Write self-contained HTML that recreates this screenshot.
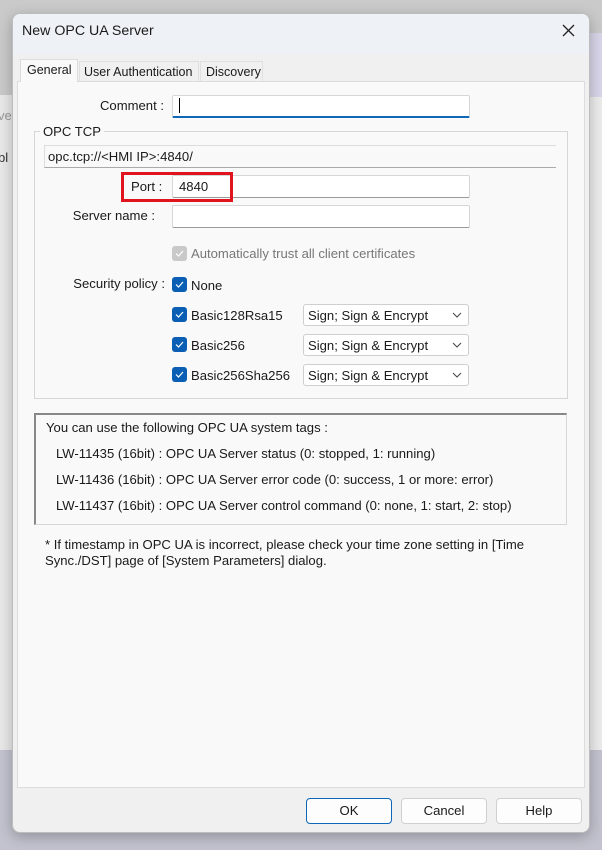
<!DOCTYPE html>
<html><head><meta charset="utf-8"><style>
*{box-sizing:border-box;margin:0;padding:0}
body{width:602px;height:850px;position:relative;overflow:hidden;background:#cacaca;font-family:"Liberation Sans","Segoe UI",sans-serif;font-size:13.1px;color:#1a1a1a}
.a{position:absolute;white-space:nowrap}
.lbl{position:absolute;text-align:right}
.inp{position:absolute;background:#fff;border:1px solid #d6d6d6;border-bottom-color:#9a9a9a;border-radius:2px}
.cb{position:absolute;width:15px;height:15px;background:#0a5fb4;border-radius:3px}
.cb svg{position:absolute;left:2px;top:2px}
.sel{position:absolute;left:303px;width:166px;height:22px;background:#fff;border:1px solid #cfcfcf;border-radius:3px;padding:3px 0 0 4px;white-space:nowrap}
.sel svg{position:absolute;right:6px;top:7px}
.btn{position:absolute;top:798px;width:86px;height:26px;background:#fdfdfd;border:1px solid #d0d0d0;border-radius:4px;text-align:center;line-height:24px}
</style></head><body>
<div class="a" style="left:590px;top:33px;width:12px;height:64px;background:#d8d6e8"></div>
<div class="a" style="left:0;top:95px;width:12px;height:655px;background:#e9e9e9"></div>
<div class="a" style="left:590px;top:97px;width:12px;height:653px;background:#ececec"></div>
<div class="a" style="left:0;top:750px;width:602px;height:100px;background:#c3c3cf"></div>
<div class="a" style="left:-2px;top:108px;color:#999">ve</div>
<div class="a" style="left:-2px;top:150px;color:#333">bl</div>
<div class="a" style="left:12px;top:13px;width:578px;height:820px;background:#f0f0f0;border:1px solid #bdbdbd;border-radius:8px;box-shadow:0 4px 14px rgba(0,0,0,.25);overflow:hidden">
<div class="a" style="left:0;top:0;width:578px;height:40px;background:#eef2f7"></div>
</div>
<div class="a" style="left:22px;top:23px;font-size:14.2px">New OPC UA Server</div>
<svg class="a" style="left:562px;top:24px" width="13" height="13"><path d="M1 1L12 12M12 1L1 12" stroke="#222" stroke-width="1.3"/></svg>
<div class="a" style="left:17px;top:81px;width:568px;height:707px;background:#f9f9f9;border:1px solid #dcdcdc"></div>
<div class="a" style="left:20px;top:59px;width:58px;height:23px;background:#f9f9f9;border:1px solid #dcdcdc;border-bottom:none;padding:3px 0 0 6px;font-size:12.5px">General</div>
<div class="a" style="left:79px;top:61px;width:120px;height:20px;background:#f0f0f0;border:1px solid #e0e0e0;border-bottom:none;padding:3px 0 0 4px;font-size:12.5px">User Authentication</div>
<div class="a" style="left:200px;top:61px;width:63px;height:20px;background:#f0f0f0;border:1px solid #e0e0e0;border-bottom:none;padding:3px 0 0 5px;font-size:12.5px">Discovery</div>
<div class="lbl" style="left:60px;width:104px;top:98px">Comment :</div>
<div class="inp" style="left:172px;top:95px;width:298px;height:23px;border-bottom:2px solid #0f67b8"></div>
<div class="a" style="left:179px;top:98px;width:1px;height:15px;background:#000"></div>
<div class="a" style="left:34px;top:131px;width:534px;height:268px;border:1px solid #d6d6d6"></div>
<div class="a" style="left:40px;top:124px;background:#f9f9f9;padding:0 3px">OPC TCP</div>
<div class="a" style="left:44px;top:145px;width:512px;height:23px;border-top:1px solid #dcdcdc;border-left:1px solid #dcdcdc;border-bottom:1px solid #aaa;padding:3px 0 0 3px">opc.tcp://&lt;HMI IP&gt;:4840/</div>
<div class="inp" style="left:172px;top:175px;width:298px;height:23px;padding:3px 0 0 6px">4840</div>
<div class="a" style="left:121px;top:172px;width:112px;height:30px;border:3px solid #e0141c"></div>
<div class="a" style="left:131px;top:179px">Port :</div>
<div class="lbl" style="left:40px;width:115px;top:208px">Server name :</div>
<div class="inp" style="left:172px;top:205px;width:298px;height:23px"></div>
<div class="cb" style="left:172px;top:246px;background:#c9c9c9"><svg width="11" height="11"><path d="M2 5.5L4.5 8L9 3" stroke="#fff" stroke-width="1.2" fill="none"/></svg></div>
<div class="a" style="left:191px;top:246px;color:#777">Automatically trust all client certificates</div>
<div class="lbl" style="left:40px;width:125px;top:276px">Security policy :</div>
<div class="cb" style="left:172px;top:277px"><svg width="11" height="11"><path d="M2 5.5L4.5 8L9 3" stroke="#fff" stroke-width="1.2" fill="none"/></svg></div>
<div class="a" style="left:191px;top:278px">None</div>
<div class="cb" style="left:172px;top:307px"><svg width="11" height="11"><path d="M2 5.5L4.5 8L9 3" stroke="#fff" stroke-width="1.2" fill="none"/></svg></div>
<div class="a" style="left:191px;top:308px">Basic128Rsa15</div>
<div class="cb" style="left:172px;top:337px"><svg width="11" height="11"><path d="M2 5.5L4.5 8L9 3" stroke="#fff" stroke-width="1.2" fill="none"/></svg></div>
<div class="a" style="left:191px;top:338px">Basic256</div>
<div class="cb" style="left:172px;top:367px"><svg width="11" height="11"><path d="M2 5.5L4.5 8L9 3" stroke="#fff" stroke-width="1.2" fill="none"/></svg></div>
<div class="a" style="left:191px;top:368px">Basic256Sha256</div>
<div class="sel" style="top:304px">Sign; Sign &amp; Encrypt<svg width="10" height="6"><path d="M1 1L5 5L9 1" stroke="#444" fill="none"/></svg></div>
<div class="sel" style="top:334px">Sign; Sign &amp; Encrypt<svg width="10" height="6"><path d="M1 1L5 5L9 1" stroke="#444" fill="none"/></svg></div>
<div class="sel" style="top:364px">Sign; Sign &amp; Encrypt<svg width="10" height="6"><path d="M1 1L5 5L9 1" stroke="#444" fill="none"/></svg></div>
<div class="a" style="left:34px;top:413px;width:533px;height:112px;border:1px solid #d6d6d6;border-top:2px solid #888;border-left:2px solid #888"></div>
<div class="a" style="left:46px;top:420px">You can use the following OPC UA system tags :</div>
<div class="a" style="left:56px;top:446px">LW-11435 (16bit) : OPC UA Server status (0: stopped, 1: running)</div>
<div class="a" style="left:56px;top:472px">LW-11436 (16bit) : OPC UA Server error code (0: success, 1 or more: error)</div>
<div class="a" style="left:56px;top:498px">LW-11437 (16bit) : OPC UA Server control command (0: none, 1: start, 2: stop)</div>
<div class="a" style="left:45px;top:537px;width:510px;line-height:16px;white-space:normal">* If timestamp in OPC UA is incorrect, please check your time zone setting in [Time Sync./DST] page of [System Parameters] dialog.</div>
<div class="btn" style="left:306px;border:1px solid #0f67b8">OK</div>
<div class="btn" style="left:401px">Cancel</div>
<div class="btn" style="left:496px">Help</div>
</body></html>
